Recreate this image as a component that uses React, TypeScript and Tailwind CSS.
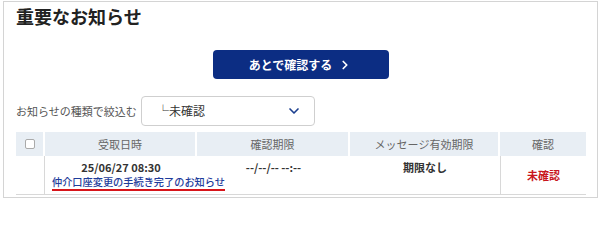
import { ChevronDown, ChevronRight } from 'lucide-react'

const font = { fontFamily: '"Noto Sans CJK JP", "Noto Sans", sans-serif' }

export default function App() {
  return (
    <div className="h-[201px] w-[600px] bg-white pl-[3px] pt-px" style={font}>
      <div className="h-[197px] w-[595px] overflow-hidden border border-[#d4d4d4] bg-white">
        <h1 className="mt-[1px] pl-[12px] text-[18px] font-bold leading-[26px] text-[#222]">重要なお知らせ</h1>

        <div className="mt-[21px] flex justify-center">
          <button
            type="button"
            className="flex h-[29px] w-[176px] items-center justify-center gap-[6px] rounded-[4px] bg-[#0c2d83] text-[12px] font-bold text-white"
          >
            あとで確認する
            <ChevronRight size={14} strokeWidth={3} />
          </button>
        </div>

        <div className="mt-[17px] flex items-center pl-[12px]">
          <span className="w-[125px] text-[11px] text-[#555]">お知らせの種類で絞込む</span>
          <div className="flex h-[30px] w-[174px] items-center justify-between rounded-[4px] border border-[#cfcfcf] pl-[15px] pr-[12px]">
            <span className="text-[12px] text-[#333]">└未確認</span>
            <ChevronDown size={16} strokeWidth={2.5} className="text-[#1c3f8f]" />
          </div>
        </div>

        <div className="ml-[12px] mt-[6px] w-[570px] border-b border-[#d8d8d8]">
          <div className="flex h-[24px] bg-[#e8eef4] text-[11px] text-[#666]">
            <div className="flex w-[29px] items-center justify-center border-r-2 border-white">
              <span className="h-[10px] w-[10px] rounded-[2px] border border-[#aaa] bg-white" />
            </div>
            <div className="flex w-[152px] items-center justify-center border-r-2 border-white">受取日時</div>
            <div className="flex w-[153px] items-center justify-center border-r-2 border-white">確認期限</div>
            <div className="flex w-[150px] items-center justify-center border-r-2 border-white">メッセージ有効期限</div>
            <div className="flex flex-1 items-center justify-center">確認</div>
          </div>

          <div className="flex h-[38px]">
            <div className="w-[29px] border-r border-[#d8d8d8]" />
            <div className="w-[455px] pt-[3px]">
              <div className="flex text-[11px] font-bold leading-[16px] text-[#333]">
                <div className="w-[152px] text-center">25/06/27 08:30</div>
                <div className="w-[153px] text-center">--/--/-- --:--</div>
                <div className="w-[150px] text-center">期限なし</div>
              </div>
              <div className="flex pl-[7px]">
                <a
                  href="#"
                  className="border-b-2 border-[#d7141a] pb-px text-[10.2px] font-medium leading-[13px] text-[#1e3c9b]"
                >
                  仲介口座変更の手続き完了のお知らせ
                </a>
              </div>
            </div>
            <div className="flex flex-1 items-center justify-center border-l border-[#d8d8d8] text-[11px] font-bold text-[#c8161d]">
              未確認
            </div>
          </div>
        </div>
      </div>
    </div>
  )
}
